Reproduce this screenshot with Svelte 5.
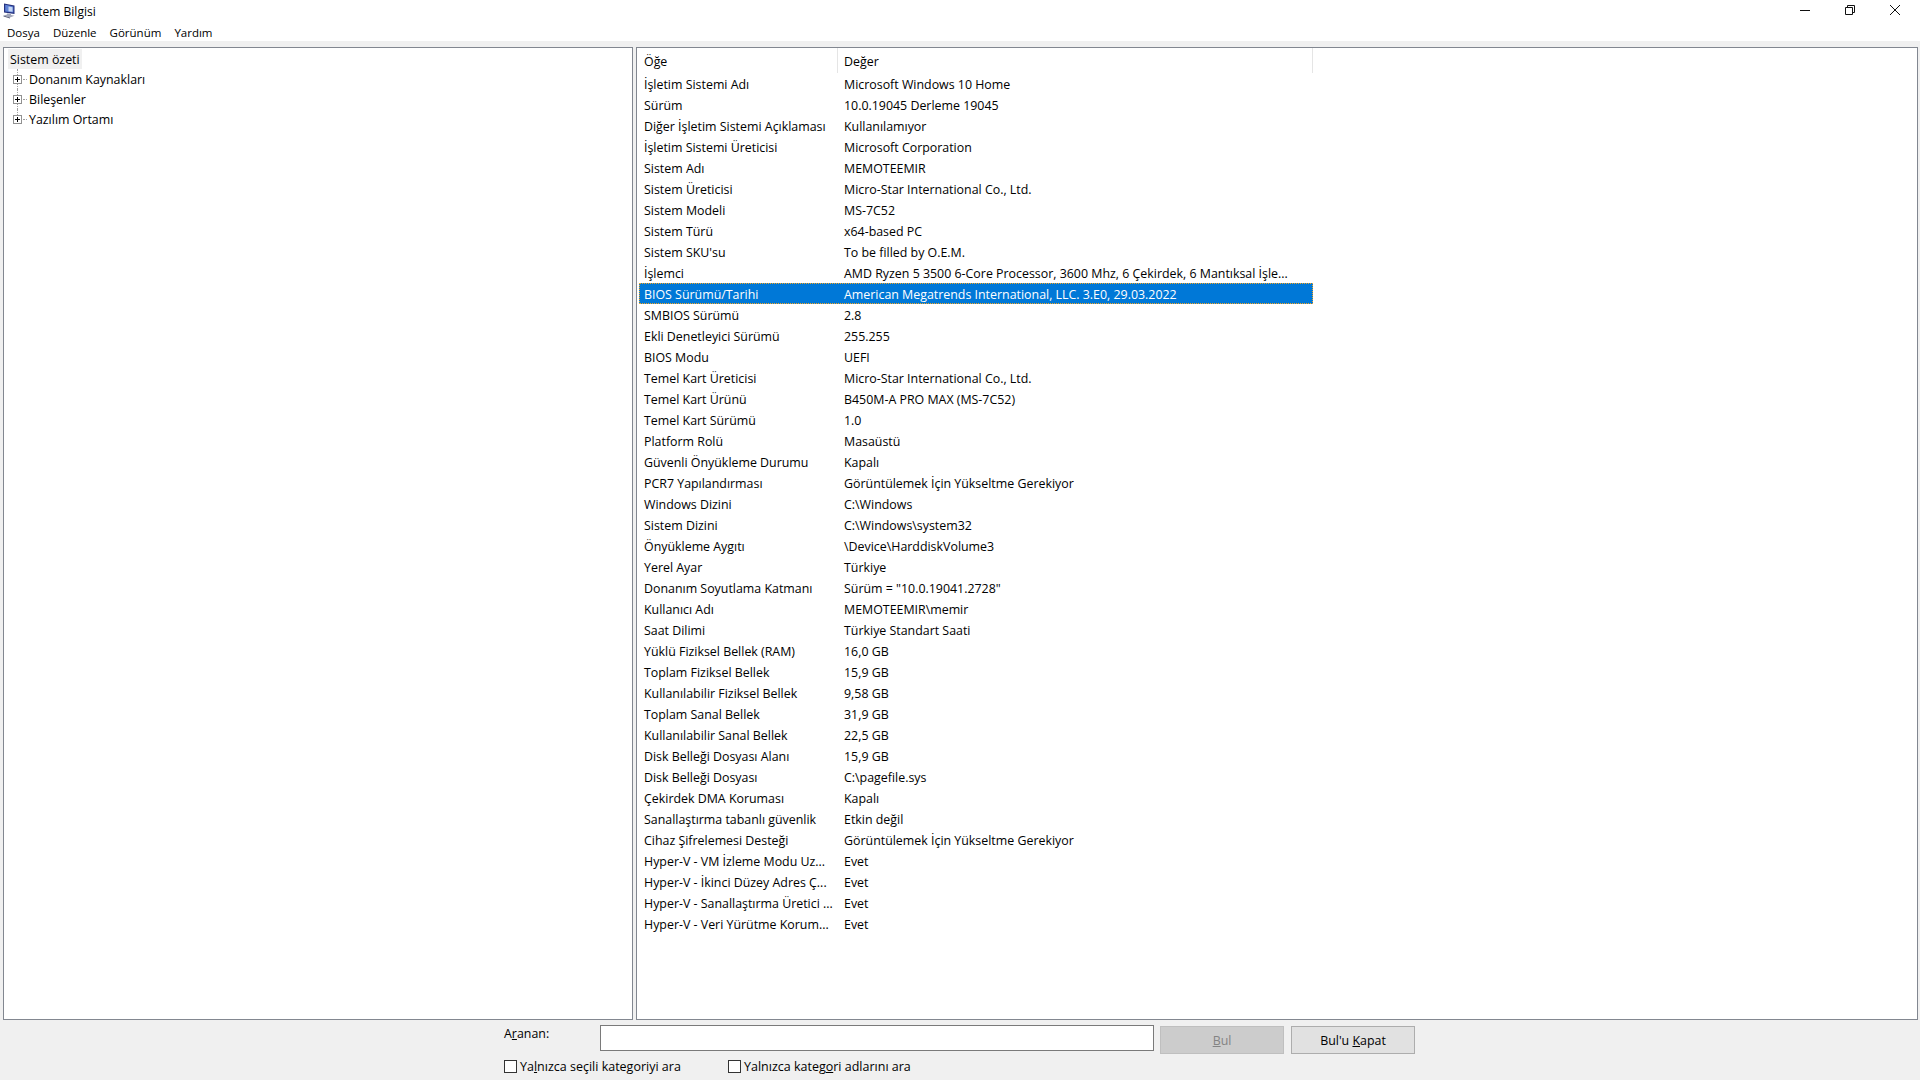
<script lang="ts">
	const rows = [
		['İşletim Sistemi Adı', 'Microsoft Windows 10 Home'],
		['Sürüm', '10.0.19045 Derleme 19045'],
		['Diğer İşletim Sistemi Açıklaması', 'Kullanılamıyor'],
		['İşletim Sistemi Üreticisi', 'Microsoft Corporation'],
		['Sistem Adı', 'MEMOTEEMIR'],
		['Sistem Üreticisi', 'Micro-Star International Co., Ltd.'],
		['Sistem Modeli', 'MS-7C52'],
		['Sistem Türü', 'x64-based PC'],
		["Sistem SKU'su", 'To be filled by O.E.M.'],
		['İşlemci', 'AMD Ryzen 5 3500 6-Core Processor, 3600 Mhz, 6 Çekirdek, 6 Mantıksal İşle...'],
		['BIOS Sürümü/Tarihi', 'American Megatrends International, LLC. 3.E0, 29.03.2022'],
		['SMBIOS Sürümü', '2.8'],
		['Ekli Denetleyici Sürümü', '255.255'],
		['BIOS Modu', 'UEFI'],
		['Temel Kart Üreticisi', 'Micro-Star International Co., Ltd.'],
		['Temel Kart Ürünü', 'B450M-A PRO MAX (MS-7C52)'],
		['Temel Kart Sürümü', '1.0'],
		['Platform Rolü', 'Masaüstü'],
		['Güvenli Önyükleme Durumu', 'Kapalı'],
		['PCR7 Yapılandırması', 'Görüntülemek İçin Yükseltme Gerekiyor'],
		['Windows Dizini', 'C:\\Windows'],
		['Sistem Dizini', 'C:\\Windows\\system32'],
		['Önyükleme Aygıtı', '\\Device\\HarddiskVolume3'],
		['Yerel Ayar', 'Türkiye'],
		['Donanım Soyutlama Katmanı', 'Sürüm = "10.0.19041.2728"'],
		['Kullanıcı Adı', 'MEMOTEEMIR\\memir'],
		['Saat Dilimi', 'Türkiye Standart Saati'],
		['Yüklü Fiziksel Bellek (RAM)', '16,0 GB'],
		['Toplam Fiziksel Bellek', '15,9 GB'],
		['Kullanılabilir Fiziksel Bellek', '9,58 GB'],
		['Toplam Sanal Bellek', '31,9 GB'],
		['Kullanılabilir Sanal Bellek', '22,5 GB'],
		['Disk Belleği Dosyası Alanı', '15,9 GB'],
		['Disk Belleği Dosyası', 'C:\\pagefile.sys'],
		['Çekirdek DMA Koruması', 'Kapalı'],
		['Sanallaştırma tabanlı güvenlik', 'Etkin değil'],
		['Cihaz Şifrelemesi Desteği', 'Görüntülemek İçin Yükseltme Gerekiyor'],
		['Hyper-V - VM İzleme Modu Uz...', 'Evet'],
		['Hyper-V - İkinci Düzey Adres Ç...', 'Evet'],
		['Hyper-V - Sanallaştırma Üretici ...', 'Evet'],
		['Hyper-V - Veri Yürütme Korum...', 'Evet']
	];
	const selected = 10;
	const tree = ['Donanım Kaynakları', 'Bileşenler', 'Yazılım Ortamı'];
	const menus = ['Dosya', 'Düzenle', 'Görünüm', 'Yardım'];
</script>

<div class="window">
	<div class="titlebar">
		<svg class="appicon" width="16" height="16" viewBox="0 0 16 16">
			<path d="M2 0.5 L12.5 2.5 L12.5 11 L2 9.5 Z" fill="#24307e" />
			<path d="M3.2 1.8 L11.3 3.4 L11.3 9.6 L3.2 8.6 Z" fill="#5f83d6" />
			<path d="M6.5 3.5 L10.5 4.2 L10.5 8.8 L6.5 8.3 Z" fill="#c5d6f4" />
			<path d="M5 10.5 L9 11 L9 12 L12.5 12.8 L8 14.5 L1.5 12.5 L5 11.5 Z" fill="#a2a6b8" />
			<path d="M1.5 12.5 L8 14.5 L8 15.5 L1.5 13.5 Z" fill="#5b6079" />
		</svg>
		<span class="title">Sistem Bilgisi</span>
		<div class="winbtns">
			<svg width="10" height="10" viewBox="0 0 10 10"><path d="M0 5.5H10" stroke="#111" fill="none" /></svg>
			<svg width="10" height="10" viewBox="0 0 10 10"><path d="M0.5 2.5H7.5V9.5H0.5ZM2.5 2.5V0.5H9.5V7.5H7.5" stroke="#111" fill="none" /></svg>
			<svg width="10" height="10" viewBox="0 0 10 10"><path d="M0 0L10 10M10 0L0 10" stroke="#111" fill="none" /></svg>
		</div>
	</div>
	<div class="menubar">
		{#each menus as m}
			<span>{m}</span>
		{/each}
	</div>

	<div class="panes">
		<div class="pane left">
			<div class="root"><span>Sistem özeti</span></div>
			<ul class="tree">
				{#each tree as t}
					<li>
						<span class="exp"></span><span class="dash"></span><span>{t}</span>
					</li>
				{/each}
			</ul>
		</div>
		<div class="pane right">
			<div class="head">
				<div class="c1">Öğe</div>
				<div class="c2">Değer</div>
			</div>
			{#each rows as r, i}
				<div class="row" class:sel={i === selected}>
					<div class="c1">{r[0]}</div>
					<div class="c2">{r[1]}</div>
				</div>
			{/each}
		</div>
	</div>

	<div class="find">
		<div class="findline">
			<label class="lbl" for="q">A<u>r</u>anan:</label>
			<input id="q" type="text" />
			<button class="btn off"><u>B</u>ul</button>
			<button class="btn">Bul'u <u>K</u>apat</button>
		</div>
		<div class="checks">
			<div class="chk"><i></i><span>Ya<u>l</u>nızca seçili kategoriyi ara</span></div>
			<div class="chk"><i></i><span>Yalnızca kateg<u>o</u>ri adlarını ara</span></div>
		</div>
	</div>
</div>

<style>
	:global(body) {
		margin: 0;
		background: #f0f0f0;
	}

	.window {
		width: 1920px;
		height: 1080px;
		display: flex;
		flex-direction: column;
		font-family: 'Open Sans', 'Noto Sans', sans-serif;
		font-size: 12.4px;
		color: #000;
		overflow: hidden;
	}

	.titlebar {
		height: 22px;
		background: #fff;
		display: flex;
		align-items: center;
		padding-left: 2px;
		font-size: 12px;
	}

	.appicon {
		margin-right: 5px;
	}

	.winbtns {
		margin-left: auto;
		display: flex;
		gap: 35px;
		padding-right: 20px;
		margin-top: -2px;
	}

	.menubar {
		height: 19px;
		background: #fff;
		display: flex;
		gap: 13px;
		padding-left: 7px;
		padding-top: 2px;
		box-sizing: border-box;
		line-height: 17px;
		font-size: 11.5px;
	}

	.panes {
		margin-top: 6px;
		height: 973px;
		display: flex;
		padding-left: 3px;
		gap: 3px;
	}

	.pane {
		background: #fff;
		border: 1px solid #828790;
		box-sizing: border-box;
		height: 100%;
	}

	.left {
		width: 630px;
		padding-top: 1px;
	}

	.right {
		width: 1282px;
		padding-left: 2px;
	}

	.root {
		padding-left: 4px;
		height: 20px;
		line-height: 21px;
	}

	.root span {
		display: inline-block;
		background: #f0f0f0;
		padding: 0 2px;
		height: 20px;
	}

	.tree {
		list-style: none;
		margin: 0;
		padding: 0 0 0 5px;
	}

	.tree li {
		height: 20px;
		display: flex;
		align-items: center;
		position: relative;
	}

	.tree li::before {
		content: '';
		position: absolute;
		left: 8px;
		top: 0;
		bottom: 0;
		border-left: 1px dotted #a0a0a0;
	}

	.tree li:last-child::before {
		bottom: 10px;
	}

	.exp {
		width: 9px;
		height: 9px;
		box-sizing: border-box;
		border: 1px solid #919191;
		background:
			linear-gradient(#000, #000) center / 5px 1px no-repeat,
			linear-gradient(#000, #000) center / 1px 5px no-repeat,
			#fff;
		margin-left: 4px;
		position: relative;
		z-index: 1;
	}

	.dash {
		width: 4px;
		border-top: 1px dotted #a0a0a0;
		margin-right: 2px;
		margin-left: 1px;
	}

	.head {
		display: flex;
		height: 25px;
		line-height: 28px;
		width: 674px;
		border-right: 1px solid #e5e5e5;
		box-sizing: border-box;
	}

	.head .c1 {
		width: 199px;
		border-right: 1px solid #e5e5e5;
	}

	.head .c2 {
		padding-left: 6px;
	}

	.row {
		display: flex;
		height: 21px;
		box-sizing: border-box;
		padding-top: 2px;
		line-height: 20px;
		width: 674px;
		white-space: nowrap;
	}

	.c1 {
		width: 200px;
		box-sizing: border-box;
		padding-left: 5px;
		flex: none;
	}

	.c2 {
		padding-left: 5px;
	}

	.sel {
		background: #0078d7;
		color: #fff;
		outline: 1px dotted #f5a623;
		outline-offset: -1px;
	}

	.find {
		flex: 1;
		padding-left: 504px;
		padding-top: 5px;
	}

	.findline {
		display: flex;
		align-items: flex-start;
		height: 35px;
	}

	.lbl {
		width: 96px;
		line-height: 17px;
	}

	input {
		width: 554px;
		height: 26px;
		box-sizing: border-box;
		border: 1px solid #7a7a7a;
		background: #fff;
		padding: 0;
		margin: 0;
		outline: none;
	}

	.btn {
		width: 124px;
		height: 28px;
		margin: 1px 0 0 6px;
		box-sizing: border-box;
		border: 1px solid #adadad;
		background: #e1e1e1;
		font: inherit;
		color: #000;
		padding: 0;
	}

	.btn:last-child {
		margin-left: 7px;
	}

	.off {
		background: #cccccc;
		border-color: #bfbfbf;
		color: #838383;
	}

	.checks {
		display: flex;
		gap: 0;
	}

	.chk {
		width: 224px;
		display: flex;
		align-items: center;
		gap: 3px;
		line-height: 13px;
		font-size: 12.5px;
	}

	.chk i {
		display: block;
		width: 13px;
		height: 13px;
		box-sizing: border-box;
		border: 1px solid #333;
		background: #fff;
	}
</style>
